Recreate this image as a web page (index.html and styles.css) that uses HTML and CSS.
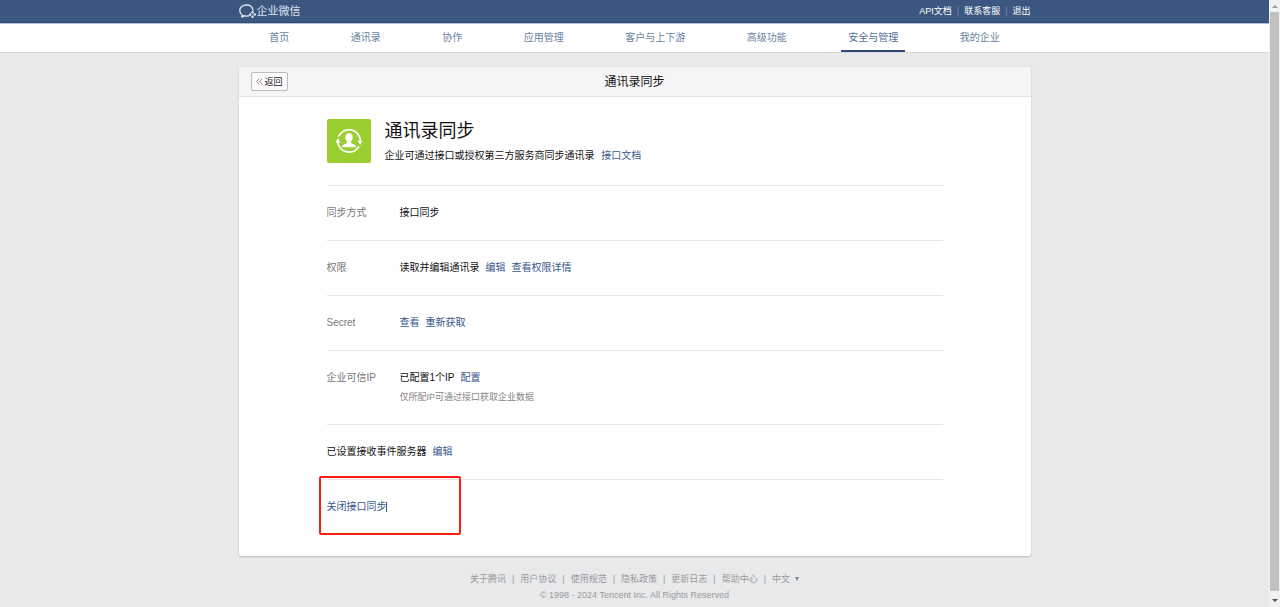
FILE: index.html
```html
<!DOCTYPE html>
<html lang="zh-CN">
<head>
<meta charset="utf-8">
<meta name="viewport" content="width=device-width, initial-scale=1">
<title>通讯录同步</title>
<link rel="stylesheet" href="styles.css">
</head>
<body>
<div class="window">
  <div class="page">
    <header class="topbar">
      <div class="container topbar-inner">
        <a class="brand" href="#">
          <svg class="brand-icon" viewBox="0 0 34 28" aria-hidden="true">
            <path d="M28 12C27 6 22 2 15 2C7.500 2 1.500 6.500 1.500 13C1.500 17 3.500 20 6.500 22L5.500 26L10.500 23.500C13.500 24.500 17 24.500 20 23.500" fill="none" stroke="currentColor" stroke-width="2.800" stroke-linecap="round" stroke-linejoin="round"/>
            <g fill="currentColor"><circle cx="27" cy="16.500" r="2.500"/><circle cx="31.500" cy="21" r="2.500"/><circle cx="27" cy="25.500" r="2.500"/><circle cx="22.500" cy="21" r="2.500"/></g>
          </svg>
          <span>企业微信</span>
        </a>
        <nav class="toplinks" aria-label="账号">
          <a href="#">API文档</a><span class="bar">|</span>
          <a href="#">联系客服</a><span class="bar">|</span>
          <a href="#">退出</a>
        </nav>
      </div>
    </header>
    <div class="navbar">
      <nav class="container nav" aria-label="主导航">
        <a href="#">首页</a>
        <a href="#">通讯录</a>
        <a href="#">协作</a>
        <a href="#">应用管理</a>
        <a href="#">客户与上下游</a>
        <a href="#">高级功能</a>
        <a class="active" href="#" aria-current="page">安全与管理</a>
        <a href="#">我的企业</a>
      </nav>
    </div>
    <main class="container card">
      <div class="card-head">
        <button class="back" type="button">
          <svg class="back-icon" viewBox="0 0 14 14" aria-hidden="true"><path d="M6.500 1L1.500 7l5 6M12.500 1l-5 6l5 6" fill="none" stroke="currentColor" stroke-width="1.800"/></svg>返回</button>
        <h2 class="card-title">通讯录同步</h2>
      </div>
      <div class="card-body">
        <section class="intro">
          <svg class="app-icon" viewBox="0 0 44 44" aria-hidden="true">
            <rect width="44" height="44" rx="2" fill="#9bce31"/>
            <g fill="none" stroke="#fff" stroke-width="1.700"><path d="M11.500 17.500A11.500 11.500 0 0 1 33.400 21"/><path d="M32 27.500A11.500 11.500 0 0 1 10.700 23"/></g>
            <path d="M8.500 23.500L10.800 19l2.700 4.500zM30.500 21.500h5L33.200 26z" fill="#fff"/>
            <path d="M22 14.300c-2.500 0-3.800 1.700-3.700 4.200c.1 1.800.7 2.900 1.700 3.900c.2 1.700-.6 2.100-2.600 2.800c-1.800.6-2.500 1.100-2.500 3h14.200c0-1.900-.7-2.400-2.500-3c-2-.7-2.800-1.100-2.600-2.800c1-1 1.600-2.100 1.700-3.900c.1-2.500-1.200-4.200-3.700-4.200z" fill="#fff"/>
          </svg>
          <div>
            <h1 class="intro-title">通讯录同步</h1>
            <p class="intro-text">企业可通过接口或授权第三方服务商同步通讯录 <a href="#">接口文档</a></p>
          </div>
        </section>
        <section class="row">
          <div class="label">同步方式</div>
          <div class="value"><span>接口同步</span></div>
        </section>
        <section class="row">
          <div class="label">权限</div>
          <div class="value"><span>读取并编辑通讯录</span><a href="#">编辑</a><a href="#">查看权限详情</a></div>
        </section>
        <section class="row">
          <div class="label">Secret</div>
          <div class="value"><a href="#">查看</a><a href="#">重新获取</a></div>
        </section>
        <section class="row">
          <div class="label">企业可信IP</div>
          <div>
            <div class="value"><span>已配置1个IP</span><a href="#">配置</a></div>
            <p class="hint">仅所配IP可通过接口获取企业数据</p>
          </div>
        </section>
        <section class="row">
          <div class="value"><span>已设置接收事件服务器</span><a href="#">编辑</a></div>
        </section>
        <section class="row last">
          <a class="close-sync" href="#">关闭接口同步</a>
          <span class="highlight" aria-hidden="true"></span>
        </section>
      </div>
    </main>
    <footer class="footer">
      <nav class="footer-links" aria-label="页脚">
        <a href="#">关于腾讯</a><span>|</span>
        <a href="#">用户协议</a><span>|</span>
        <a href="#">使用规范</a><span>|</span>
        <a href="#">隐私政策</a><span>|</span>
        <a href="#">更新日志</a><span>|</span>
        <a href="#">帮助中心</a><span>|</span>
        <button class="lang" type="button">中文<i class="caret"></i></button>
      </nav>
      <p class="copyright">© 1998 - 2024 Tencent Inc. All Rights Reserved</p>
    </footer>
  </div>
  <div class="scrollbar" aria-hidden="true">
    <i class="arrow up"></i>
    <div class="thumb"></div>
    <i class="arrow down"></i>
  </div>
</div>
</body>
</html>
```
FILE: styles.css
```css
* { box-sizing: border-box; }
body {
  margin: 0;
  background: #e8e9eb;
  color: #111;
  font: 10px/18px "Liberation Sans", "Noto Sans CJK SC", sans-serif;
}
h1, h2, p { margin: 0; font-weight: 400; }
a { color: #36568c; text-decoration: none; }
button { font: inherit; cursor: pointer; }

.window { display: flex; min-height: 100vh; }
.page { flex: 1; min-width: 0; }
.container { width: 100%; max-width: 792px; margin: 0 auto; }

.topbar { background: #3b5780; border-bottom: 1px solid #2f4d7c; }
.topbar-inner { display: flex; justify-content: space-between; align-items: center; height: 22px; }
.brand { display: flex; align-items: center; gap: 1px; color: #dfe5ee; font-size: 11px; }
.brand-icon { width: 17px; height: 14px; }
.toplinks { display: flex; gap: 5px; font-size: 9px; }
.toplinks a { color: #fff; }
.bar { color: #8090ab; }

.navbar { background: #fff; border-top: 1px solid #b5c1d3; border-bottom: 1px solid #d6d8db; }
.nav { display: flex; justify-content: space-around; }
.nav a { padding: 5px 7px 3px; border-bottom: 2px solid transparent; color: #6a7f9f; }
.nav .active { border-color: #2d4a7a; color: #526d98; }

.card {
  margin-top: 14px;
  background: #fff;
  border-radius: 3px;
  box-shadow: 0 1px 2px rgba(0, 0, 0, .2);
}
.card-head {
  display: grid;
  grid-template-columns: 1fr auto 1fr;
  align-items: center;
  padding: 5px 12px;
  background: #f5f5f5;
  border-bottom: 1px solid #e2e3e4;
  border-radius: 3px 3px 0 0;
}
.card-title { font-size: 12px; }
.back {
  display: flex;
  align-items: center;
  justify-self: start;
  gap: 2px;
  height: 19px;
  padding: 0 4px;
  border: 1px solid #bbb;
  border-radius: 2px;
  background: #fbfbfb;
  color: #222;
  font-size: 9px;
}
.back-icon { width: 7px; height: 7px; color: #888; }

.card-body { padding: 0 88px; }
.intro { display: flex; gap: 14px; padding: 22px 0 20px; }
.app-icon { flex: none; width: 44px; height: 44px; }
.intro-title { font-size: 18px; line-height: 24px; }
.intro-text { margin-top: 4px; }
.intro-text a { margin-left: 4px; color: #3d5a8c; }

.row { display: flex; padding: 18px 0; border-top: 1px solid #e6e6e6; }
.label { flex: 0 0 73px; color: #777; }
.value { display: flex; gap: 6px; }
.hint { margin-top: 1px; color: #858585; font-size: 9px; }
.last { position: relative; padding-bottom: 40px; }
.close-sync { background: linear-gradient(#36568c, #36568c) right center / 1px 10px no-repeat; }
.highlight {
  position: absolute;
  top: -4px;
  left: -8px;
  width: 142px;
  height: 59px;
  border: 2px solid #fb1d12;
  border-radius: 2px;
  pointer-events: none;
}

.footer { padding: 14px 0 4px; color: #999; font-size: 9px; text-align: center; }
.footer-links { display: flex; justify-content: center; gap: 6px; }
.footer-links a { color: #999; }
.lang { display: flex; align-items: center; gap: 5px; padding: 0; border: 0; background: none; color: #999; }
.caret { border: 2px solid transparent; border-top: 4px solid #888; border-bottom: 0; }
.copyright { line-height: 14px; }

.scrollbar {
  display: flex;
  flex-direction: column;
  align-items: center;
  justify-content: space-between;
  gap: 4px;
  width: 11px;
  padding: 5px 1px;
  background: #f1f1f1;
}
.thumb { flex: 1; align-self: stretch; margin-bottom: 4px; background: #c1c1c1; }
.arrow { border: 3px solid transparent; }
.up { border-top: 0; border-bottom-color: #999; }
.down { border-bottom: 0; border-top-color: #505050; }
```
